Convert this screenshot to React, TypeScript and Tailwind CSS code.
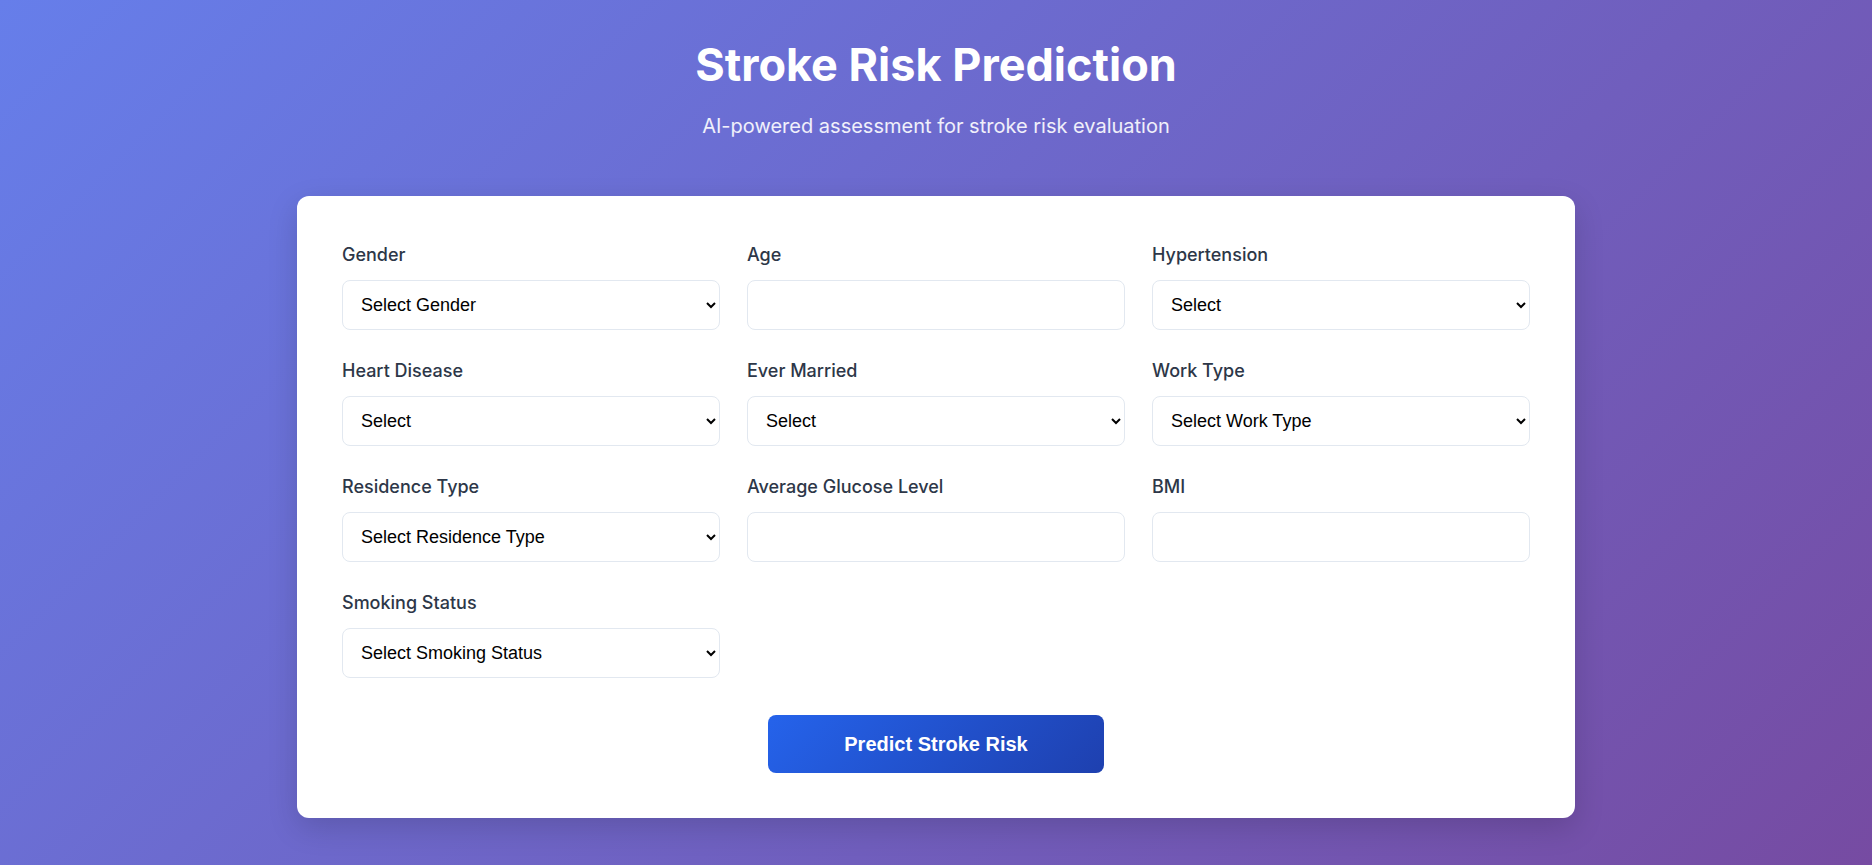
import React, { useState } from "react";

type Field = {
  name: string;
  label: string;
  kind: "select" | "number";
  options?: string[];
};

const fields: Field[] = [
  { name: "gender", label: "Gender", kind: "select", options: ["Select Gender", "Male", "Female", "Other"] },
  { name: "age", label: "Age", kind: "number" },
  { name: "hypertension", label: "Hypertension", kind: "select", options: ["Select", "No", "Yes"] },
  { name: "heart_disease", label: "Heart Disease", kind: "select", options: ["Select", "No", "Yes"] },
  { name: "ever_married", label: "Ever Married", kind: "select", options: ["Select", "No", "Yes"] },
  {
    name: "work_type",
    label: "Work Type",
    kind: "select",
    options: ["Select Work Type", "Private", "Self-employed", "Govt job", "Children", "Never worked"],
  },
  {
    name: "residence_type",
    label: "Residence Type",
    kind: "select",
    options: ["Select Residence Type", "Urban", "Rural"],
  },
  { name: "avg_glucose_level", label: "Average Glucose Level", kind: "number" },
  { name: "bmi", label: "BMI", kind: "number" },
  {
    name: "smoking_status",
    label: "Smoking Status",
    kind: "select",
    options: ["Select Smoking Status", "Never smoked", "Formerly smoked", "Smokes", "Unknown"],
  },
];

const controlClass =
  "block w-full h-[50px] px-[14px] rounded-lg border border-[#e2e8f0] bg-white text-[18px] text-black font-['Liberation_Sans',Arial,sans-serif] outline-none focus:border-[#2563eb]";

export default function App() {
  const [values, setValues] = useState<Record<string, string>>({});

  const update = (name: string, value: string) =>
    setValues(v => ({ ...v, [name]: value }));

  return (
    <div className="min-h-screen bg-[linear-gradient(135deg,#667eea_0%,#764ba2_100%)] font-['Inter',sans-serif] pt-[42px] pb-10">
      <header className="text-center text-white">
        <h1 className="text-[45px] leading-none font-bold">Stroke Risk Prediction</h1>
        <p className="mt-[25px] text-xl leading-7 text-white/90">
          AI-powered assessment for stroke risk evaluation
        </p>
      </header>

      <form
        onSubmit={e => e.preventDefault()}
        className="mx-auto mt-[56px] w-[1278px] rounded-xl bg-white p-[45px] shadow-[0_10px_30px_rgba(0,0,0,0.15)]"
      >
        <div className="grid grid-cols-3 gap-x-[27px] gap-y-[27px]">
          {fields.map(f => (
            <div key={f.name}>
              <label
                htmlFor={f.name}
                className="block mb-[12px] text-[18px] leading-[27px] font-medium text-[#2d3748]"
              >
                {f.label}
              </label>
              {f.kind === "select" ? (
                <select
                  id={f.name}
                  className={controlClass}
                  value={values[f.name] ?? ""}
                  onChange={e => update(f.name, e.target.value)}
                >
                  {f.options!.map((o, i) => (
                    <option key={o} value={i === 0 ? "" : o}>
                      {o}
                    </option>
                  ))}
                </select>
              ) : (
                <input
                  id={f.name}
                  type="number"
                  className={controlClass}
                  value={values[f.name] ?? ""}
                  onChange={e => update(f.name, e.target.value)}
                />
              )}
            </div>
          ))}
        </div>

        <div className="mt-[37px] flex justify-center">
          <button
            type="submit"
            className="h-[58px] w-[336px] rounded-lg bg-[linear-gradient(135deg,#2563eb_0%,#1e40af_100%)] text-[20px] font-bold text-white font-['Liberation_Sans',Arial,sans-serif]"
          >
            Predict Stroke Risk
          </button>
        </div>
      </form>
    </div>
  );
}
